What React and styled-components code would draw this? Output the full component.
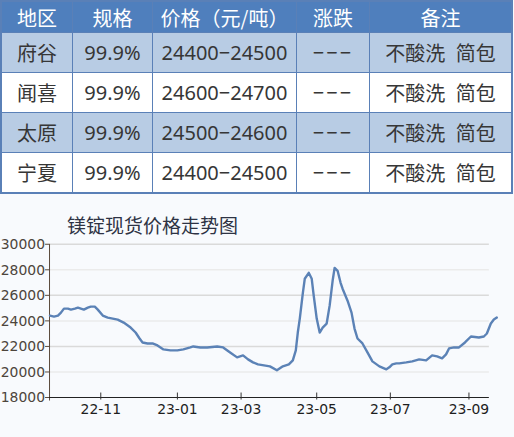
import React from "react";
import styled, { createGlobalStyle } from "styled-components";

const Global = createGlobalStyle`
  html, body { margin: 0; padding: 0; background: #f8fafd; }
  body { font-family: "Noto Sans", "Noto Sans CJK SC", sans-serif; }
`;

const rows = [
  { area: "府谷", spec: "99.9%", price: "24400−24500", change: "−−−", note: "不酸洗  简包" },
  { area: "闻喜", spec: "99.9%", price: "24600−24700", change: "−−−", note: "不酸洗  简包" },
  { area: "太原", spec: "99.9%", price: "24500−24600", change: "−−−", note: "不酸洗  简包" },
  { area: "宁夏", spec: "99.9%", price: "24400−24500", change: "−−−", note: "不酸洗  简包" },
];

const heads = ["地区", "规格", "价格（元/吨）", "涨跌", "备注"];

const Page = styled.div`
  width: 514px;
  height: 437px;
  display: flex;
  flex-direction: column;
  overflow: hidden;
`;

const Grid = styled.div`
  width: 509px;
  display: grid;
  grid-template-columns: 70px 80px 144px 73px 142px;
  border: 2px solid #5a80b7;
  background: #fff;
`;

const HeadCell = styled.div`
  height: 30px;
  display: flex;
  align-items: center;
  justify-content: center;
  background: #4f7fbd;
  color: #fff;
  font-family: "Noto Sans CJK SC", sans-serif;
  font-size: 20px;
  border-left: ${(p) => (p.$first ? "none" : "1px solid #5a80b7")};
  white-space: nowrap;
`;

const Cell = styled.div`
  height: 39px;
  display: flex;
  align-items: center;
  justify-content: center;
  background: ${(p) => (p.$alt ? "#b8cce4" : "#ffffff")};
  color: #363636;
  font-size: 20px;
  border-top: 1px solid #5a80b7;
  border-left: ${(p) => (p.$first ? "none" : "1px solid #5a80b7")};
  white-space: pre;
  letter-spacing: ${(p) => (p.$dash ? "2px" : "0")};
`;

const Title = styled.div`
  margin-top: 21px;
  height: 20px;
  line-height: 20px;
  padding-left: 67px;
  font-family: "Noto Sans CJK SC", sans-serif;
  font-size: 19px;
  color: #2e3344;
`;

const Chart = styled.svg`
  display: block;
  width: 514px;
  height: 203px;
`;

// page y -> svg y (chart starts at page y 234)
const Y0 = 234;
const pts = [
  [49,315],[53,316],[57,315],[60,312],[63,308],[67,308],[70,309],[74,308],[77,307],[80,308],
  [83,309],[87,307],[90,306],[94,306],[97,309],[102,315],[107,317],[112,318],[117,319],[123,322],
  [130,327],[135,332],[139,338],[142,342],[147,343],[152,343],[157,345],[163,349],[170,350],[177,350],
  [183,349],[190,347],[193,346],[200,347],[207,347],[217,346],[223,347],[230,352],[237,357],[243,355],
  [248,359],[253,362],[258,364],[264,365],[270,366],[277,370],[283,366],[289,364],[293,360],[296,350],
  [298,332],[300,318],[303,293],[305,278],[309,272],[312,278],[314,295],[317,318],[320,332],[323,327],
  [327,323],[330,305],[333,280],[335,267],[338,270],[341,282],[343,288],[348,300],[352,312],[355,328],
  [358,338],[363,343],[368,352],[373,361],[380,366],[387,369],[390,367],[393,364],[397,363],[400,363],
  [407,362],[413,361],[420,359],[427,360],[433,355],[438,356],[443,358],[447,354],[450,348],[455,347],
  [460,347],[466,342],[472,336],[480,337],[485,336],[488,333],[492,323],[495,319],[498,317],
];

const yLabels = ["30000", "28000", "26000", "24000", "22000", "20000", "18000"];
const xTicks = [
  { x: 100, label: "22-11" },
  { x: 177, label: "23-01" },
  { x: 241, label: "23-03" },
  { x: 317, label: "23-05" },
  { x: 391, label: "23-07" },
  { x: 470, label: "23-09" },
];

function PriceChart() {
  const gy = (i) => 243.3 + i * 25.67 - Y0;
  const axisY = gy(6);
  return (
    <Chart viewBox="0 0 514 203">
      {yLabels.map((l, i) => (
        <g key={l}>
          {i < 6 && (
            <line x1="49" x2="490" y1={gy(i)} y2={gy(i)} stroke={i % 2 ? "#ebebeb" : "#dadada"} strokeWidth="1.5" />
          )}
          <line x1="44" x2="49" y1={gy(i)} y2={gy(i)} stroke="#5a4a3a" strokeWidth="1" />
          <text x="44" y={gy(i) + 5} textAnchor="end" fontFamily="DejaVu Sans, sans-serif" fontSize="14" fill="#4d453c">
            {l}
          </text>
        </g>
      ))}
      <line x1="48.5" x2="48.5" y1={gy(0)} y2={axisY + 3} stroke="#5a4a3a" strokeWidth="1" />
      <line x1="48" x2="490" y1={axisY} y2={axisY} stroke="#222" strokeWidth="1.2" />
      {xTicks.map((t) => (
        <g key={t.label}>
          <line x1={t.x} x2={t.x} y1={axisY - 5} y2={axisY + 2} stroke="#333" strokeWidth="1" />
          <text x={t.x} y={axisY + 17} textAnchor="middle" fontFamily="DejaVu Sans, sans-serif" fontSize="14" fill="#1e1e1e">
            {t.label}
          </text>
        </g>
      ))}
      <polyline
        points={pts.map(([x, y]) => `${x},${y - Y0}`).join(" ")}
        fill="none"
        stroke="#5b82b6"
        strokeWidth="2.4"
        strokeLinejoin="round"
        strokeLinecap="round"
      />
    </Chart>
  );
}

export default function App() {
  return (
    <Page>
      <Global />
      <Grid>
        {heads.map((h, i) => (
          <HeadCell key={h} $first={i === 0}>{h}</HeadCell>
        ))}
        {rows.map((r, ri) =>
          [r.area, r.spec, r.price, r.change, r.note].map((v, ci) => (
            <Cell key={ri + "-" + ci} $alt={ri % 2 === 0} $first={ci === 0} $dash={ci === 3}>
              {v}
            </Cell>
          ))
        )}
      </Grid>
      <Title>镁锭现货价格走势图</Title>
      <PriceChart />
    </Page>
  );
}
